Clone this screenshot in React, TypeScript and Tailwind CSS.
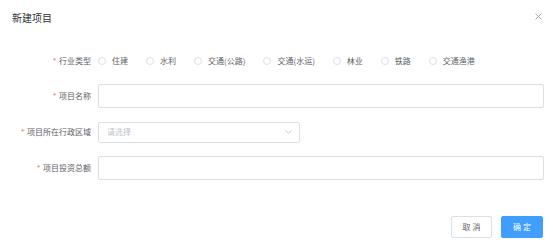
import React from "react";

const font = { fontFamily: '"Noto Sans CJK SC", "Noto Sans", sans-serif' };

function Label({ text }: { text: string }) {
  return (
    <div className="w-[91px] shrink-0 flex items-center justify-end text-[8px] leading-[12px] text-[#606266] whitespace-nowrap">
      <span className="text-[#f56c6c] mr-[3px]" style={{ fontFamily: '"Liberation Sans", sans-serif' }}>*</span>
      <span>{text}</span>
    </div>
  );
}

function Radio({ text }: { text: string }) {
  return (
    <div className="flex items-center mr-[18px]">
      <span className="w-[8px] h-[8px] rounded-full border border-[#dcdfe6] bg-white shrink-0" />
      <span className="ml-[6px] text-[8px] leading-[12px] text-[#606266] whitespace-nowrap">{text}</span>
    </div>
  );
}

export default function App() {
  const types = ["住建", "水利", "交通(公路)", "交通(水运)", "林业", "铁路", "交通渔港"];
  return (
    <div className="w-[553px] h-[247px] bg-white flex flex-col" style={font}>
      <div className="h-[36px] flex items-center justify-between pl-[12px] pr-[11px]">
        <span className="text-[10px] leading-[14px] text-[#303133]">新建项目</span>
        <svg width="7" height="7" viewBox="0 0 7 7" className="-mt-[4px]">
          <path d="M0.5 0.5 L6.5 6.5 M6.5 0.5 L0.5 6.5" stroke="#909399" strokeWidth="0.8" fill="none" />
        </svg>
      </div>
      <div className="flex flex-col pr-[9px]">
        <div className="mt-[13px] h-[24px] flex items-center">
          <Label text="行业类型" />
          <div className="ml-[7px] flex items-center">
            {types.map((t) => (
              <Radio key={t} text={t} />
            ))}
          </div>
        </div>
        <div className="mt-[11px] h-[24px] flex items-center">
          <Label text="项目名称" />
          <div className="ml-[7px] flex-1 h-[24px] border border-[#dcdfe6] rounded-[2px] bg-white" />
        </div>
        <div className="mt-[12px] h-[24px] flex items-center">
          <Label text="项目所在行政区域" />
          <div className="ml-[7px] w-[202px] h-[21px] border border-[#dcdfe6] rounded-[2px] bg-white flex items-center justify-between pl-[8px] pr-[7px]">
            <span className="text-[8px] leading-[12px] text-[#c0c4cc]">请选择</span>
            <svg width="7" height="4" viewBox="0 0 7 4">
              <path d="M0.5 0.5 L3.5 3.3 L6.5 0.5" stroke="#c0c4cc" strokeWidth="0.9" fill="none" />
            </svg>
          </div>
        </div>
        <div className="mt-[12px] h-[24px] flex items-center">
          <Label text="项目投资总额" />
          <div className="ml-[7px] flex-1 h-[24px] border border-[#dcdfe6] rounded-[2px] bg-white" />
        </div>
      </div>
      <div className="mt-[36px] flex justify-end pr-[10px] gap-[9px]">
        <button className="w-[41px] h-[22px] border border-[#dcdfe6] rounded-[2px] bg-white text-[8px] text-[#606266] flex items-center justify-center">
          取 消
        </button>
        <button className="w-[42px] h-[22px] border border-[#409eff] rounded-[2px] bg-[#409eff] text-[8px] text-white flex items-center justify-center">
          确 定
        </button>
      </div>
    </div>
  );
}
